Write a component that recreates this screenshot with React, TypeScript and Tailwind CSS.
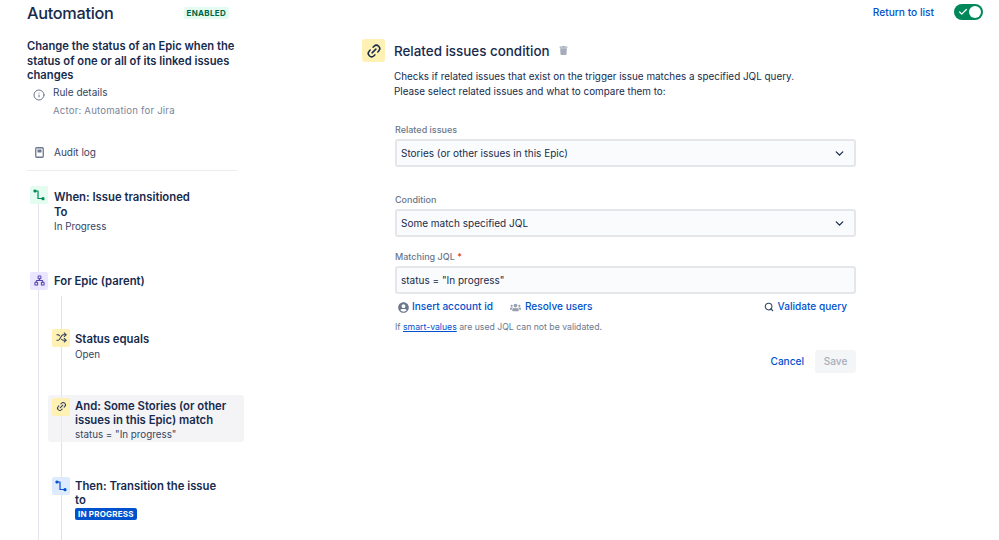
import { ChevronDown, Check, Search, Info, Link2, Shuffle, Network } from "lucide-react";
import { FaTrash, FaUserCircle, FaUsers } from "react-icons/fa";
import type { ReactNode } from "react";

function StatusIcon({ color }: { color: string }) {
  return (
    <svg width="12" height="12" viewBox="0 0 12 12" fill="none" stroke={color} strokeWidth="1.2" strokeLinecap="round">
      <path d="M2 2 H5 V9.5 H9.5" strokeLinejoin="round" />
      <circle cx="2" cy="2" r="1" fill={color} />
      <circle cx="10" cy="9.7" r="1" fill={color} />
    </svg>
  );
}

function AuditIcon() {
  return (
    <svg width="9" height="11" viewBox="0 0 9 11" fill="none">
      <rect x="0.75" y="0.75" width="7.5" height="9.5" rx="1" stroke="#6b778c" strokeWidth="1.3" />
      <rect x="2.5" y="2.5" width="4" height="3" fill="#6b778c" />
    </svg>
  );
}

function StepIcon({ bg, children }: { bg: string; children: ReactNode }) {
  return <div className={`w-[18px] h-[18px] rounded-[2px] flex items-center justify-center shrink-0 ${bg}`}>{children}</div>;
}

function SelectBox({ value }: { value: string }) {
  return (
    <div className="h-[28px] bg-[#fafbfc] border-2 border-[#e4e6ea] rounded-[3px] flex items-center justify-between pl-[4px] pr-[8px] text-[10px] text-[#172b4d]">
      <span>{value}</span>
      <ChevronDown size={13} strokeWidth={2.4} />
    </div>
  );
}

function FieldLabel({ children }: { children: ReactNode }) {
  return <div className="text-[9px] leading-[12px] font-medium text-[#6b778c] mb-[3px]">{children}</div>;
}

export default function App() {
  return (
    <div className="w-[999px] h-[540px] overflow-hidden bg-white flex text-[#172b4d] font-['Inter',sans-serif]">
      {/* sidebar */}
      <aside className="w-[362px] shrink-0 pl-[27px] pt-[2px] relative">
        <div className="flex items-center h-[22px] w-[202px] justify-between">
          <h1 className="text-[16.3px] font-medium leading-[22px] tracking-[-0.3px]">Automation</h1>
          <span className="h-[12px] px-[3px] rounded-[2px] bg-[#e3fcef] text-[#006644] text-[8px] leading-[12px] font-bold tracking-[0.3px]">ENABLED</span>
        </div>
        <p className="w-[215px] mt-[15px] text-[11.2px] leading-[14.5px] font-semibold">
          Change the status of an Epic when the status of one or all of its linked issues changes
        </p>
        <div className="flex mt-[2px] pl-[6px]">
          <Info size={12} className="text-[#6b778c] mt-[4px]" />
          <div className="ml-[8px]">
            <div className="text-[10px] leading-[14px] text-[#344563]">Rule details</div>
            <div className="text-[9.6px] leading-[12px] mt-[6px] text-[#7a869a] tracking-[0.2px]">Actor: Automation for Jira</div>
          </div>
        </div>
        <div className="flex items-center mt-[29px] pl-[8px] h-[14px]">
          <AuditIcon />
          <span className="ml-[10px] text-[10px] text-[#344563]">Audit log</span>
        </div>
        <div className="w-[210px] h-[1px] bg-[#ebecf0] mt-[10px]" />

        {/* timeline */}
        <div className="relative mt-[15px] pl-[3px]">
          <div className="absolute left-[10.5px] top-[10px] bottom-[-400px] w-[1px] bg-[#e4e5ec]" />
          <div className="absolute left-[33.5px] top-[110px] bottom-[-400px] w-[1px] bg-[#dfe1e6]" />

          <div className="relative flex gap-[6px]">
            <StepIcon bg="bg-[#e3fcef]"><StatusIcon color="#00875a" /></StepIcon>
            <div className="w-[150px]">
              <div className="text-[11.3px] leading-[15px] font-semibold pt-[4px]">When: Issue transitioned</div>
              <div className="text-[11.3px] leading-[15px] font-semibold">To</div>
              <div className="text-[9.8px] leading-[13px] text-[#344563]">In Progress</div>
            </div>
          </div>

          <div className="relative flex gap-[6px] mt-[39px]">
            <StepIcon bg="bg-[#eae6ff]"><Network size={11} className="text-[#5243aa]" strokeWidth={2.2} /></StepIcon>
            <div className="text-[11.3px] leading-[15px] font-semibold pt-[2px]">For Epic (parent)</div>
          </div>

          <div className="relative flex gap-[5px] mt-[39px] ml-[22px]">
            <StepIcon bg="bg-[#fff0b3]"><Shuffle size={11} strokeWidth={2.2} className="text-[#253858]" /></StepIcon>
            <div>
              <div className="text-[11.3px] leading-[15px] font-semibold pt-[3px]">Status equals</div>
              <div className="text-[9.8px] leading-[13px] text-[#344563] mt-[1px]">Open</div>
            </div>
          </div>

          <div className="relative flex gap-[5px] mt-[34px] ml-[18px] w-[196px] h-[47px] pl-[4px] pt-[3px] rounded-[3px] bg-[#eff0f2]/70">
            <StepIcon bg="bg-[#fff0b3]"><Link2 size={11} strokeWidth={2.2} className="text-[#253858] -rotate-45" /></StepIcon>
            <div className="pt-[1px]">
              <div className="text-[11.3px] leading-[14.5px] font-semibold w-[165px]">And: Some Stories (or other issues in this Epic) match</div>
              <div className="text-[9.8px] leading-[13px] text-[#344563]">status = "In progress"</div>
            </div>
          </div>

          <div className="relative flex gap-[5px] mt-[35px] ml-[22px]">
            <StepIcon bg="bg-[#deebff]"><StatusIcon color="#0052cc" /></StepIcon>
            <div>
              <div className="text-[11.3px] leading-[14.5px] font-semibold w-[150px] pt-[2px]">Then: Transition the issue to</div>
              <div className="inline-block h-[12px] px-[3px] rounded-[2px] bg-[#0052cc] text-white text-[8px] leading-[12px] font-bold tracking-[0.2px] align-top">IN PROGRESS</div>
            </div>
          </div>
        </div>
      </aside>

      {/* main */}
      <main className="flex-1 relative pt-[39px]">
        <div className="flex items-center h-[23px]">
          <div className="w-[23px] h-[23px] rounded-[3px] bg-[#fff0b3] flex items-center justify-center">
            <Link2 size={16} strokeWidth={2.2} className="text-[#172b4d] -rotate-45" />
          </div>
          <h2 className="ml-[9px] pt-[1px] text-[13.4px] font-medium leading-[23px]">Related issues condition</h2>
          <FaTrash size={9} className="ml-[9px] text-[#a5adba]" />
        </div>
        <p className="ml-[32px] mt-[7px] text-[9.9px] leading-[15px] text-[#172b4d]">
          Checks if related issues that exist on the trigger issue matches a specified JQL query.
          <br />
          Please select related issues and what to compare them to:
        </p>
        <div className="ml-[33px] w-[461px] mt-[25px]">
          <FieldLabel>Related issues</FieldLabel>
          <SelectBox value="Stories (or other issues in this Epic)" />
          <div className="mt-[27px]">
            <FieldLabel>Condition</FieldLabel>
            <SelectBox value="Some match specified JQL" />
          </div>
          <div className="mt-[14px]">
            <FieldLabel>
              Matching JQL <span className="text-[#de350b]">*</span>
            </FieldLabel>
            <div className="h-[28px] bg-[#fafbfc] border-2 border-[#e4e6ea] rounded-[3px] flex items-center pl-[4px] text-[10px]">status = "In progress"</div>
          </div>
          <div className="flex items-center h-[14px] mt-[6px] text-[10.1px] font-medium text-[#0052cc] pl-[3px]">
            <FaUserCircle size={11} className="text-[#6b778c]" />
            <span className="ml-[3px]">Insert account id</span>
            <FaUsers size={11} className="ml-[17px] text-[#97a0af]" />
            <span className="ml-[4px]">Resolve users</span>
            <Search size={10} strokeWidth={2.6} className="ml-auto text-[#344563]" />
            <span className="ml-[4px] mr-[9px]">Validate query</span>
          </div>
          <p className="mt-[7px] text-[8.7px] leading-[12px] text-[#6b778c]">
            If <span className="text-[#0052cc] underline">smart-values</span> are used JQL can not be validated.
          </p>
          <div className="flex justify-end items-center mt-[17px] gap-[11px]">
            <span className="text-[10.1px] font-medium text-[#0052cc]">Cancel</span>
            <span className="w-[41px] h-[23px] rounded-[3px] bg-[#f4f5f7] text-[#a5adba] text-[10.1px] font-medium flex items-center justify-center">Save</span>
          </div>
        </div>

        <div className="absolute top-[4px] right-[16px] flex items-center">
          <span className="pt-[1px] text-[10.2px] font-medium text-[#0052cc]">Return to list</span>
          <div className="ml-[20px] w-[29px] h-[16px] rounded-full bg-[#00875a] flex items-center justify-between pl-[4px] pr-[2px]">
            <Check size={10} strokeWidth={3} className="text-white" />
            <span className="w-[12px] h-[12px] rounded-full bg-white" />
          </div>
        </div>
      </main>
    </div>
  );
}
